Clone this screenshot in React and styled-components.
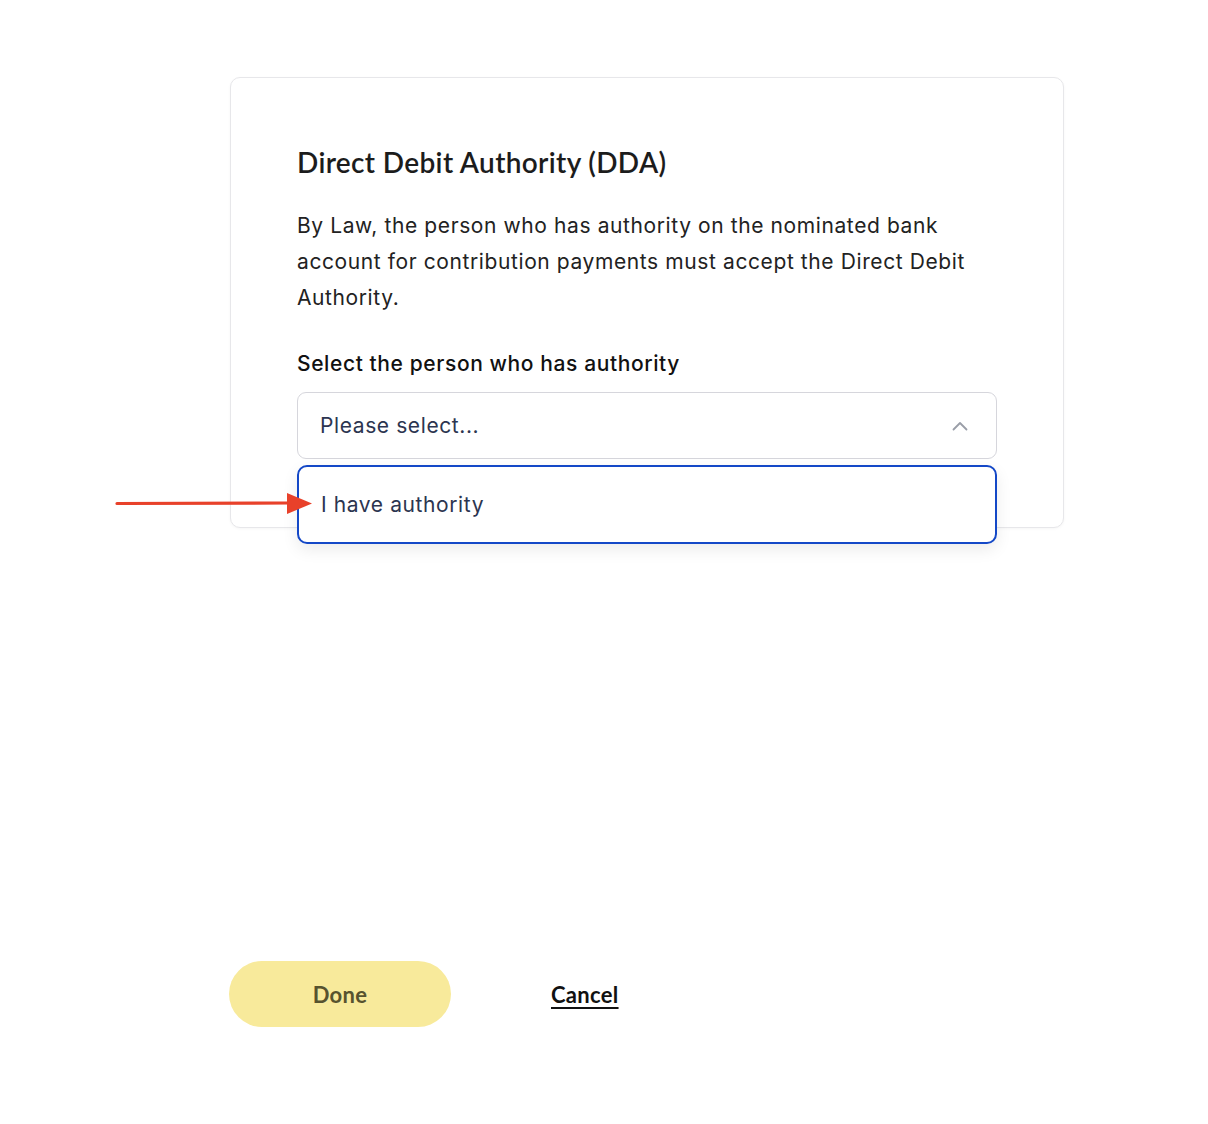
import styled, { createGlobalStyle } from "styled-components";

const GlobalStyle = createGlobalStyle`
  html, body {
    margin: 0;
    padding: 0;
    background: #ffffff;
  }
  body {
    font-family: Inter, "Liberation Sans", sans-serif;
    color: #1f1f1f;
  }
  * {
    box-sizing: border-box;
  }
`;

const Page = styled.div`
  position: relative;
  width: 1208px;
  min-height: 1124px;
  padding: 77px 0 0 230px;
`;

const Card = styled.section`
  width: 834px;
  padding: 64px 66px 68px;
  border: 1px solid #e7e7ea;
  border-radius: 10px;
  background: #fff;
  box-shadow: 0 1px 3px rgba(0, 0, 0, 0.04);
`;

const Title = styled.h2`
  margin: 0 0 26px;
  font-family: Lato, "Noto Sans", sans-serif;
  font-size: 28px;
  font-weight: 600;
  letter-spacing: 0.35px;
  line-height: 40px;
  color: #1c1c1c;
`;

const Text = styled.p`
  margin: 0 0 34px;
  font-size: 21px;
  letter-spacing: 0.6px;
  line-height: 36px;
  color: #222;
`;

const Label = styled.div`
  margin-bottom: 14px;
  font-size: 21px;
  font-weight: 450;
  letter-spacing: 0.6px;
  line-height: 28px;
  color: #111;
`;

const SelectWrap = styled.div`
  position: relative;
`;

const SelectBox = styled.div`
  display: flex;
  align-items: center;
  justify-content: space-between;
  height: 67px;
  padding: 0 28px 0 22px;
  border: 1px solid #d6d6dc;
  border-radius: 9px;
  font-size: 21px;
  letter-spacing: 0.6px;
  color: #2c3550;
`;

const Menu = styled.div`
  position: absolute;
  top: 73px;
  left: 0;
  right: 0;
  height: 79px;
  display: flex;
  align-items: center;
  padding: 0 22px;
  border: 2px solid #1448c7;
  border-radius: 10px;
  background: #fff;
  box-shadow: 0 6px 16px rgba(0, 0, 0, 0.08);
  font-size: 21px;
  letter-spacing: 0.6px;
  color: #2c3550;
`;

const Actions = styled.div`
  display: flex;
  align-items: center;
  gap: 100px;
  margin-top: 433px;
  margin-left: -1px;
`;

const DoneButton = styled.button`
  width: 222px;
  height: 66px;
  border: none;
  border-radius: 33px;
  background: #f8ea9b;
  font-family: Lato, "Noto Sans", sans-serif;
  font-size: 22px;
  font-weight: 700;
  letter-spacing: 0.3px;
  color: #57532f;
`;

const CancelLink = styled.a`
  font-family: Lato, "Noto Sans", sans-serif;
  font-size: 22px;
  font-weight: 700;
  letter-spacing: 0.3px;
  color: #111;
  text-decoration: underline;
  text-underline-offset: 4px;
`;

const Pointer = styled.svg`
  position: absolute;
  left: 115px;
  top: 490px;
`;

const ChevronUp = () => (
  <svg width="16" height="10" viewBox="0 0 16 10" fill="none">
    <path d="M1.5 8.5L8 2L14.5 8.5" stroke="#9a9ea8" strokeWidth="1.8" strokeLinecap="round" strokeLinejoin="round" />
  </svg>
);

export default function App() {
  return (
    <Page>
      <GlobalStyle />
      <Card>
        <Title>Direct Debit Authority (DDA)</Title>
        <Text>
          By Law, the person who has authority on the nominated bank account for
          contribution payments must accept the Direct Debit Authority.
        </Text>
        <Label>Select the person who has authority</Label>
        <SelectWrap>
          <SelectBox>
            <span>Please select...</span>
            <ChevronUp />
          </SelectBox>
          <Menu>I have authority</Menu>
        </SelectWrap>
      </Card>
      <Actions>
        <DoneButton>Done</DoneButton>
        <CancelLink href="#">Cancel</CancelLink>
      </Actions>
      <Pointer width="200" height="28" viewBox="0 0 200 28">
        <path d="M2 13.5 L175 13" stroke="#e8412a" strokeWidth="3.2" strokeLinecap="round" />
        <path d="M172 3 L197 13.5 L172 24 Z" fill="#e8412a" />
      </Pointer>
    </Page>
  );
}
